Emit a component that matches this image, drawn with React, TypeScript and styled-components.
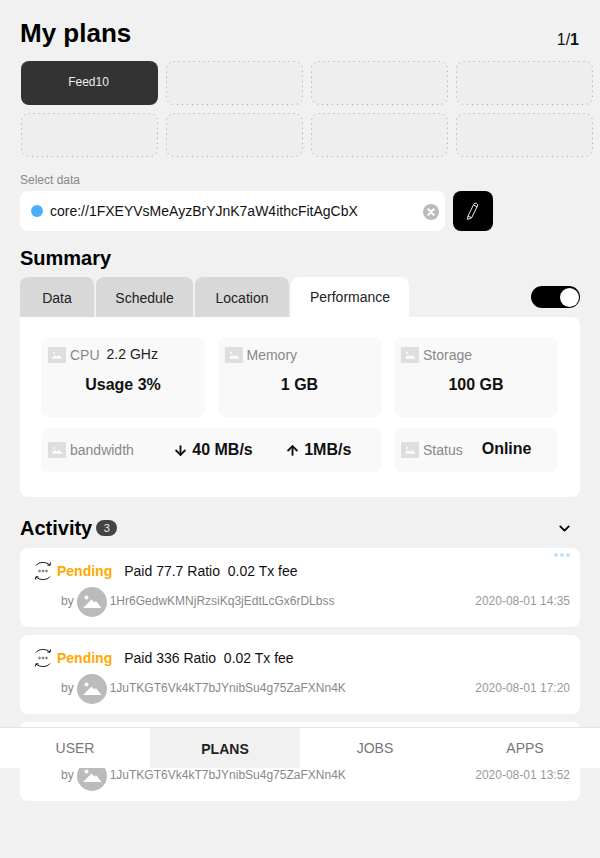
import React from "react"
import styled, { createGlobalStyle } from "styled-components"
import { ArrowDown, ArrowUp, ChevronDown } from "lucide-react"

const GlobalStyle = createGlobalStyle`
html, body {
  margin: 0;
  height: 858px;
  overflow: hidden;
  background: #f1f1f1;
  font-family: "Liberation Sans", Arial, sans-serif;
  color: #000;
}
* { box-sizing: border-box; }`

const Page = styled.div`
position: relative;
width: 600px;
height: 858px;
overflow: hidden;
padding: 17px 20px 0;`

const Header = styled.header`
display: flex;
justify-content: space-between;
align-items: flex-start;
height: 44px;`

const Title = styled.h1`
margin: 0;
font-size: 26px;
line-height: 32px;
font-weight: 700;`

const Pager = styled.div`
font-size: 16px;
line-height: 18px;
margin-top: 14px;
padding-right: 1px;
color: #111;
b { font-weight: 700; }`

const PlanGrid = styled.div`
display: grid;
grid-template-columns: repeat(4, 137px);
grid-auto-rows: 44px;
gap: 8px;
margin-left: 1px;
width: 572px;`

const Plan = styled.div<{ $active?: boolean }>`
position: relative;
display: flex;
align-items: center;
justify-content: center;
border-radius: 8px;
font-size: 12px;
color: #eee;
padding: 0 2px 2px 0;
background: ${(p) => (p.$active ? "#333" : "#eee")};`

// the slot outline has a 5px period that a css dotted border does not give
const SlotOutline = styled.svg`
position: absolute;
top: 0;
left: 0;
width: 137px;
height: 44px;`

const FieldLabel = styled.div`
margin-top: 16px;
font-size: 12px;
line-height: 14px;
color: #888;`

const FieldRow = styled.div`
display: flex;
gap: 8px;
margin-top: 4px;`

const Field = styled.div`
display: flex;
align-items: center;
width: 425px;
height: 40px;
padding: 0 6px 0 11px;
background: #fff;
border-radius: 8px;
font-size: 14px;
color: #111;`

const Dot = styled.span`
width: 12px;
height: 12px;
margin-right: 7px;
border-radius: 50%;
background: #4aaeff;`

const FieldText = styled.span`
flex: 1;`

const ClearSvg = styled.svg`
width: 16px;
height: 16px;
margin-top: 2px;`

const EditButton = styled.div`
display: flex;
align-items: center;
justify-content: center;
width: 40px;
height: 40px;
background: #000;
border-radius: 8px;`

const SectionTitle = styled.h2`
margin: 0;
font-size: 20px;
line-height: 24px;
font-weight: 700;`

const SummaryTitle = styled(SectionTitle)`
margin-top: 15px;`

const TabRow = styled.div`
display: flex;
align-items: flex-end;
margin-top: 7px;
height: 40px;`

const Tab = styled.div<{ $active?: boolean; $width: number }>`
display: flex;
align-items: center;
justify-content: center;
width: ${(p) => p.$width}px;
height: 40px;
margin-right: 2px;
border-radius: 8px 8px 0 0;
font-size: 14px;
color: #222;
padding-top: ${(p) => (p.$active ? "0" : "2px")};
background: ${(p) => (p.$active ? "#fff" : "#d8d8d8")};`

const Toggle = styled.div`
display: flex;
align-items: center;
justify-content: flex-end;
width: 49px;
height: 22px;
margin: 0 0 9px auto;
padding-right: 1px;
background: #000;
border-radius: 11px;`

const Knob = styled.span`
width: 19px;
height: 19px;
border-radius: 50%;
background: #fff;`

const Panel = styled.section`
display: grid;
grid-template-columns: 164px 164px 164px;
grid-template-rows: 80px 44px;
column-gap: 12.5px;
row-gap: 11px;
height: 180px;
padding: 20px 21px;
background: #fff;
border-radius: 0 8px 8px 8px;`

const Stat = styled.div<{ $wide?: boolean; $slim?: boolean }>`
grid-column: ${(p) => (p.$wide ? "span 2" : "auto")};
background: #f9f9f9;
border-radius: 8px;
padding: ${(p) => (p.$wide || p.$slim ? "14px 7px" : "10px 7px")};`

const StatHead = styled.div`
display: flex;
align-items: center;
height: 16px;
font-size: 14px;
color: #888;`

const Thumb = styled.svg`
flex: none;
width: 18px;
height: 16px;
margin-right: 4px;`

const StatNote = styled.span`
margin-left: 7px;
margin-top: -2px;
font-size: 14px;
color: #222;`

const StatValue = styled.div`
margin-top: 12px;
text-align: center;
font-size: 16px;
line-height: 20px;
font-weight: 700;
color: #111;`

const Rate = styled.span<{ $left: number }>`
display: flex;
align-items: center;
position: relative;
left: ${(p) => p.$left}px;
font-size: 16px;
font-weight: 700;
color: #111;
white-space: nowrap;`

const Online = styled.span`
margin-left: 19px;
margin-top: -2px;
font-size: 16px;
font-weight: 700;
color: #111;`

const ActivityHead = styled.div`
display: flex;
align-items: center;
height: 24px;
margin-top: 19px;
padding-right: 7px;`

const Badge = styled.span`
display: flex;
align-items: center;
justify-content: center;
width: 21px;
height: 16px;
margin: -1px auto 0 4px;
border-radius: 8px;
background: #444;
color: #eee;
font-size: 11px;`

const ActivityList = styled.div`
display: flex;
flex-direction: column;
gap: 8px;
margin-top: 8px;`

const Card = styled.article`
position: relative;
height: 79px;
padding: 13px 10px 0 14px;
background: #fff;
border-radius: 8px;`

const Dots = styled.div`
position: absolute;
top: 5px;
right: 10px;
display: flex;
gap: 2px;`

const MoreDot = styled.span`
width: 4px;
height: 4px;
border-radius: 50%;
background: #bfe2ff;`

const CardTop = styled.div`
display: flex;
align-items: center;
height: 20px;
font-size: 14px;
color: #111;`

const StatusIcon = styled.svg`
flex: none;
width: 18px;
height: 22px;
margin-right: 5px;`

const Pending = styled.span`
margin-right: 12px;
font-weight: 700;
color: #ffa800;`

const CardBottom = styled.div`
display: flex;
align-items: center;
height: 30px;
margin-top: 6px;
padding: 0 0 2px 27px;
font-size: 12px;
color: #888;`

const Avatar = styled.svg`
flex: none;
width: 30px;
height: 30px;
margin: 2px 3px 0;`

const Stamp = styled.span`
margin-left: auto;
color: #999;`

const Nav = styled.nav`
position: absolute;
top: 727px;
left: 0;
display: flex;
width: 600px;
height: 41px;
border-top: 1px solid #e4e4e4;
background: #fff;`

const NavItem = styled.div<{ $active?: boolean }>`
display: flex;
align-items: center;
justify-content: center;
width: 150px;
font-size: 14px;
font-weight: ${(p) => (p.$active ? 700 : 400)};
color: ${(p) => (p.$active ? "#222" : "#777")};
background: ${(p) => (p.$active ? "#f1f1f1" : "#fff")};
padding-top: ${(p) => (p.$active ? "1px" : "0")};`

const ThumbIcon = () => (
  <Thumb viewBox="0 0 18 16">
    <rect width="18" height="16" fill="#dedede" />
    <circle cx="6" cy="6" r="1" fill="#fff" />
    <path d="M3.500 11.500l3.500-3.500 2 2 2-2 3.500 3.500z" fill="#fff" />
  </Thumb>
)

const PencilIcon = () => (
  <svg width="18" height="20" viewBox="0 0 18 20" fill="none" stroke="#eee" strokeWidth="1">
    <path d="M4 15L9.700 3.400a2 2 0 0 1 2.700-1 2 2 0 0 1 1 2.700L7.600 16.800 3.400 18.400z" />
    <path d="M4 15l3.600 1.800M9.500 4l3.500 1.800" />
  </svg>
)

const ClearIcon = () => (
  <ClearSvg viewBox="0 0 16 16">
    <circle cx="8" cy="8" r="8" fill="#bbb" />
    <path d="M5.300 5.300l5.400 5.400M10.700 5.300l-5.400 5.400" stroke="#fff" strokeWidth="2" strokeLinecap="round" />
  </ClearSvg>
)

const SyncIcon = () => (
  <StatusIcon viewBox="0 0 18 22" fill="none" stroke="#111" strokeWidth="1">
    <path d="M2 5.500C5 1.500 12 1.500 16 5" />
    <path d="M16.500 2.500l-.4 2.800-2.800-.3" />
    <path d="M16 16.500C13 20.500 6 20.500 2 17" />
    <path d="M1.500 19.500l.4-2.800 2.800.3" />
    <circle cx="5.500" cy="11" r=".9" strokeWidth=".6" />
    <circle cx="9" cy="11" r=".9" strokeWidth=".6" />
    <circle cx="12.500" cy="11" r=".9" strokeWidth=".6" />
  </StatusIcon>
)

const AvatarIcon = () => (
  <Avatar viewBox="0 0 30 30">
    <circle cx="15" cy="15" r="15" fill="#bbb" />
    <circle cx="9.500" cy="10.500" r="2" fill="#fff" />
    <path d="M6 21l8.500-8.500 3 3 1.500-1.500 5.500 7z" fill="#fff" />
  </Avatar>
)

const tabs = [
  { label: "Data", width: 74 },
  { label: "Schedule", width: 97 },
  { label: "Location", width: 94 },
  { label: "Performance", width: 118, active: true },
]

const activity = [
  { amount: "77.7", address: "1Hr6GedwKMNjRzsiKq3jEdtLcGx6rDLbss", time: "2020-08-01 14:35", more: true },
  { amount: "336", address: "1JuTKGT6Vk4kT7bJYnibSu4g75ZaFXNn4K", time: "2020-08-01 17:20" },
  { amount: "336", address: "1JuTKGT6Vk4kT7bJYnibSu4g75ZaFXNn4K", time: "2020-08-01 13:52" },
]

const App = () => {
  return <Page>
    <GlobalStyle />
    <Header>
      <Title>My plans</Title>
      <Pager>1/<b>1</b></Pager>
    </Header>
    <PlanGrid>
      <Plan $active>Feed10</Plan>
      {Array.from({ length: 7 }).map((_, i) => (
        <Plan key={i}>
          <SlotOutline viewBox="0 0 137 44" fill="none">
            <rect x=".5" y=".5" width="136" height="43" rx="7.500" stroke="#a0a0a0" strokeDasharray="1 4" strokeDashoffset=".5" />
          </SlotOutline>
        </Plan>
      ))}
    </PlanGrid>

    <FieldLabel>Select data</FieldLabel>
    <FieldRow>
      <Field>
        <Dot />
        <FieldText>core://1FXEYVsMeAyzBrYJnK7aW4ithcFitAgCbX</FieldText>
        <ClearIcon />
      </Field>
      <EditButton><PencilIcon /></EditButton>
    </FieldRow>

    <SummaryTitle>Summary</SummaryTitle>
    <TabRow>
      {tabs.map((t) => <Tab key={t.label} $width={t.width} $active={t.active}>{t.label}</Tab>)}
      <Toggle><Knob /></Toggle>
    </TabRow>
    <Panel>
      <Stat>
        <StatHead><ThumbIcon />CPU<StatNote>2.2 GHz</StatNote></StatHead>
        <StatValue>Usage 3%</StatValue>
      </Stat>
      <Stat>
        <StatHead><ThumbIcon />Memory</StatHead>
        <StatValue>1 GB</StatValue>
      </Stat>
      <Stat>
        <StatHead><ThumbIcon />Storage</StatHead>
        <StatValue>100 GB</StatValue>
      </Stat>
      <Stat $wide>
        <StatHead>
          <ThumbIcon />bandwidth
          <Rate $left={39}><ArrowDown size={15} strokeWidth={3} />&nbsp;40 MB/s</Rate>
          <Rate $left={71}><ArrowUp size={15} strokeWidth={3} />&nbsp;1MB/s</Rate>
        </StatHead>
      </Stat>
      <Stat $slim>
        <StatHead><ThumbIcon />Status<Online>Online</Online></StatHead>
      </Stat>
    </Panel>

    <ActivityHead>
      <SectionTitle>Activity</SectionTitle>
      <Badge>3</Badge>
      <ChevronDown size={17} strokeWidth={2.5} />
    </ActivityHead>
    <ActivityList>
      {activity.map((a) => (
        <Card key={a.time}>
          {a.more && <Dots><MoreDot /><MoreDot /><MoreDot /></Dots>}
          <CardTop>
            <SyncIcon />
            <Pending>Pending</Pending>
            Paid {a.amount} Ratio &nbsp;0.02 Tx fee
          </CardTop>
          <CardBottom>
            by<AvatarIcon />{a.address}
            <Stamp>{a.time}</Stamp>
          </CardBottom>
        </Card>
      ))}
    </ActivityList>

    <Nav>
      <NavItem>USER</NavItem>
      <NavItem $active>PLANS</NavItem>
      <NavItem>JOBS</NavItem>
      <NavItem>APPS</NavItem>
    </Nav>
  </Page>
}

export default App
